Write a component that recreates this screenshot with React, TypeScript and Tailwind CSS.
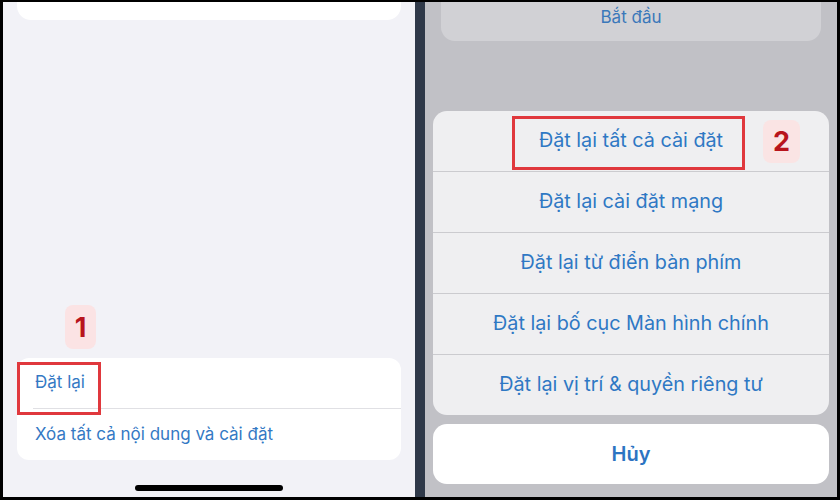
import React from "react";

const font = { fontFamily: '"Inter", "Roboto", "Noto Sans", sans-serif' };

export default function App() {
  const rows = [
    "Đặt lại tất cả cài đặt",
    "Đặt lại cài đặt mạng",
    "Đặt lại từ điển bàn phím",
    "Đặt lại bố cục Màn hình chính",
    "Đặt lại vị trí & quyền riêng tư",
  ];
  return (
    <div
      className="w-[840px] h-[500px] bg-black pt-[2px] pl-[3px] pr-[3px] pb-[3px] flex overflow-hidden"
      style={font}
    >
      {/* Left panel */}
      <div className="w-[412px] h-full bg-[#f2f2f7] flex flex-col">
        <div className="mx-[14px] h-[18px] bg-white rounded-b-[14px]" />
        <div className="mt-[285px] ml-[62px] w-[31px] h-[44px] rounded-[8px] bg-[#fbe3e4] flex items-center justify-center text-[27px] font-bold text-[#b8141c] leading-none">
          1
        </div>
        <div className="relative mt-[9px] mx-[14px] h-[102px] bg-white rounded-[12px] flex flex-col">
          <div className="h-[50px] pl-[18px] flex items-center text-[17px] text-[#3479c4]">
            Đặt lại
          </div>
          <div className="ml-[16px] h-px bg-[#e0e0e4]" />
          <div className="flex-1 pl-[18px] flex items-center text-[17px] text-[#3479c4]">
            Xóa tất cả nội dung và cài đặt
          </div>
          <div className="absolute left-0 top-[4px] w-[84px] h-[53px] border-[3px] border-[#e0383d]" />
        </div>
        <div className="mt-[25px] mx-auto w-[148px] h-[6px] rounded-full bg-black" />
      </div>

      {/* Divider */}
      <div className="w-[10px] h-full bg-[#2f3949]" />

      {/* Right panel */}
      <div className="flex-1 h-full bg-[#c1c1c6] flex flex-col">
        <div className="mx-[16px] h-[39px] bg-[#d1d1d5] rounded-b-[14px] flex items-start justify-center pt-[3px] text-[17px] text-[#3a78ba]">
          Bắt đầu
        </div>
        <div className="relative mt-[70px] mx-[8px] h-[304px] bg-[#efeff1] rounded-[14px] flex flex-col">
          {rows.map((r, i) => (
            <React.Fragment key={r}>
              {i > 0 && <div className="h-px bg-[#cbcbcf]" />}
              <div className="flex-1 flex items-center justify-center text-[19.8px] text-[#2e78c4]">
                {r}
              </div>
            </React.Fragment>
          ))}
          <div className="absolute left-[79px] top-[5px] w-[233px] h-[54px] border-[3px] border-[#e0383d]" />
          <div className="absolute left-[330px] top-[9px] w-[37px] h-[43px] rounded-[8px] bg-[#fae4e4] flex items-center justify-center text-[27px] font-bold text-[#b8141c] leading-none">
            2
          </div>
        </div>
        <div className="mt-[9px] mx-[8px] h-[60px] bg-white rounded-[14px] flex items-center justify-center text-[20px] font-semibold text-[#2c74c2]">
          Hủy
        </div>
      </div>
    </div>
  );
}
